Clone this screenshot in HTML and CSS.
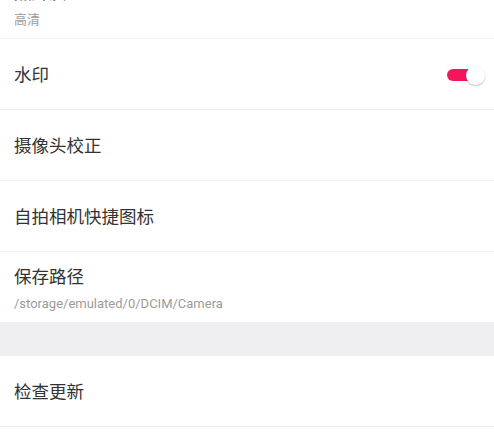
FILE: index.html
```html
<!DOCTYPE html>
<html lang="zh">
<head>
<meta charset="utf-8">
<link rel="stylesheet" href="styles.css">
</head>
<body>
<div class="list">
  <div class="item item-sub first">
    <div class="title">照片质量</div>
    <div class="sub">高清</div>
  </div>
  <div class="item item-switch">
    <div class="title">水印</div>
    <div class="switch"><span class="knob"></span></div>
  </div>
  <div class="item">
    <div class="title">摄像头校正</div>
  </div>
  <div class="item">
    <div class="title">自拍相机快捷图标</div>
  </div>
  <div class="item item-sub last-in-group">
    <div class="title">保存路径</div>
    <div class="sub">/storage/emulated/0/DCIM/Camera</div>
  </div>
  <div class="gap"></div>
  <div class="item">
    <div class="title">检查更新</div>
  </div>
</div>
</body>
</html>
```
FILE: styles.css
```css
html, body {
  margin: 0;
  padding: 0;
  background: #ffffff;
  overflow: hidden;
}
body {
  font-family: "Noto Sans CJK SC", "Roboto", "Noto Sans", sans-serif;
}
.list {
  display: flex;
  flex-direction: column;
}
.item {
  height: 70px;
  box-sizing: content-box;
  border-bottom: 1px solid #efeff1;
  padding: 0 14px;
  display: flex;
  align-items: center;
}
.first {
  margin-top: -32px;
}
.item-sub {
  flex-direction: column;
  align-items: flex-start;
  justify-content: flex-start;
}
.item-sub .title {
  margin-top: 12px;
}
.last-in-group {
  border-bottom: none;
}
.title {
  font-size: 17.5px;
  line-height: 24px;
  color: #333333;
}
.sub {
  font-family: "Roboto", "Noto Sans CJK SC", sans-serif;
  font-size: 13px;
  line-height: 18px;
  margin-top: 7px;
  color: #9b9b9b;
}
.item-switch {
  justify-content: space-between;
}
.switch {
  position: relative;
  width: 32px;
  height: 12px;
  border-radius: 6px;
  background: #f2175c;
  margin-right: 1px;
  margin-top: 2px;
}
.knob {
  position: absolute;
  right: -6px;
  top: -3px;
  width: 19px;
  height: 19px;
  border-radius: 50%;
  background: #ffffff;
  box-shadow: 0 1px 2px rgba(0,0,0,0.25);
}
.gap {
  height: 34px;
  background: #efeff2;
}
```
